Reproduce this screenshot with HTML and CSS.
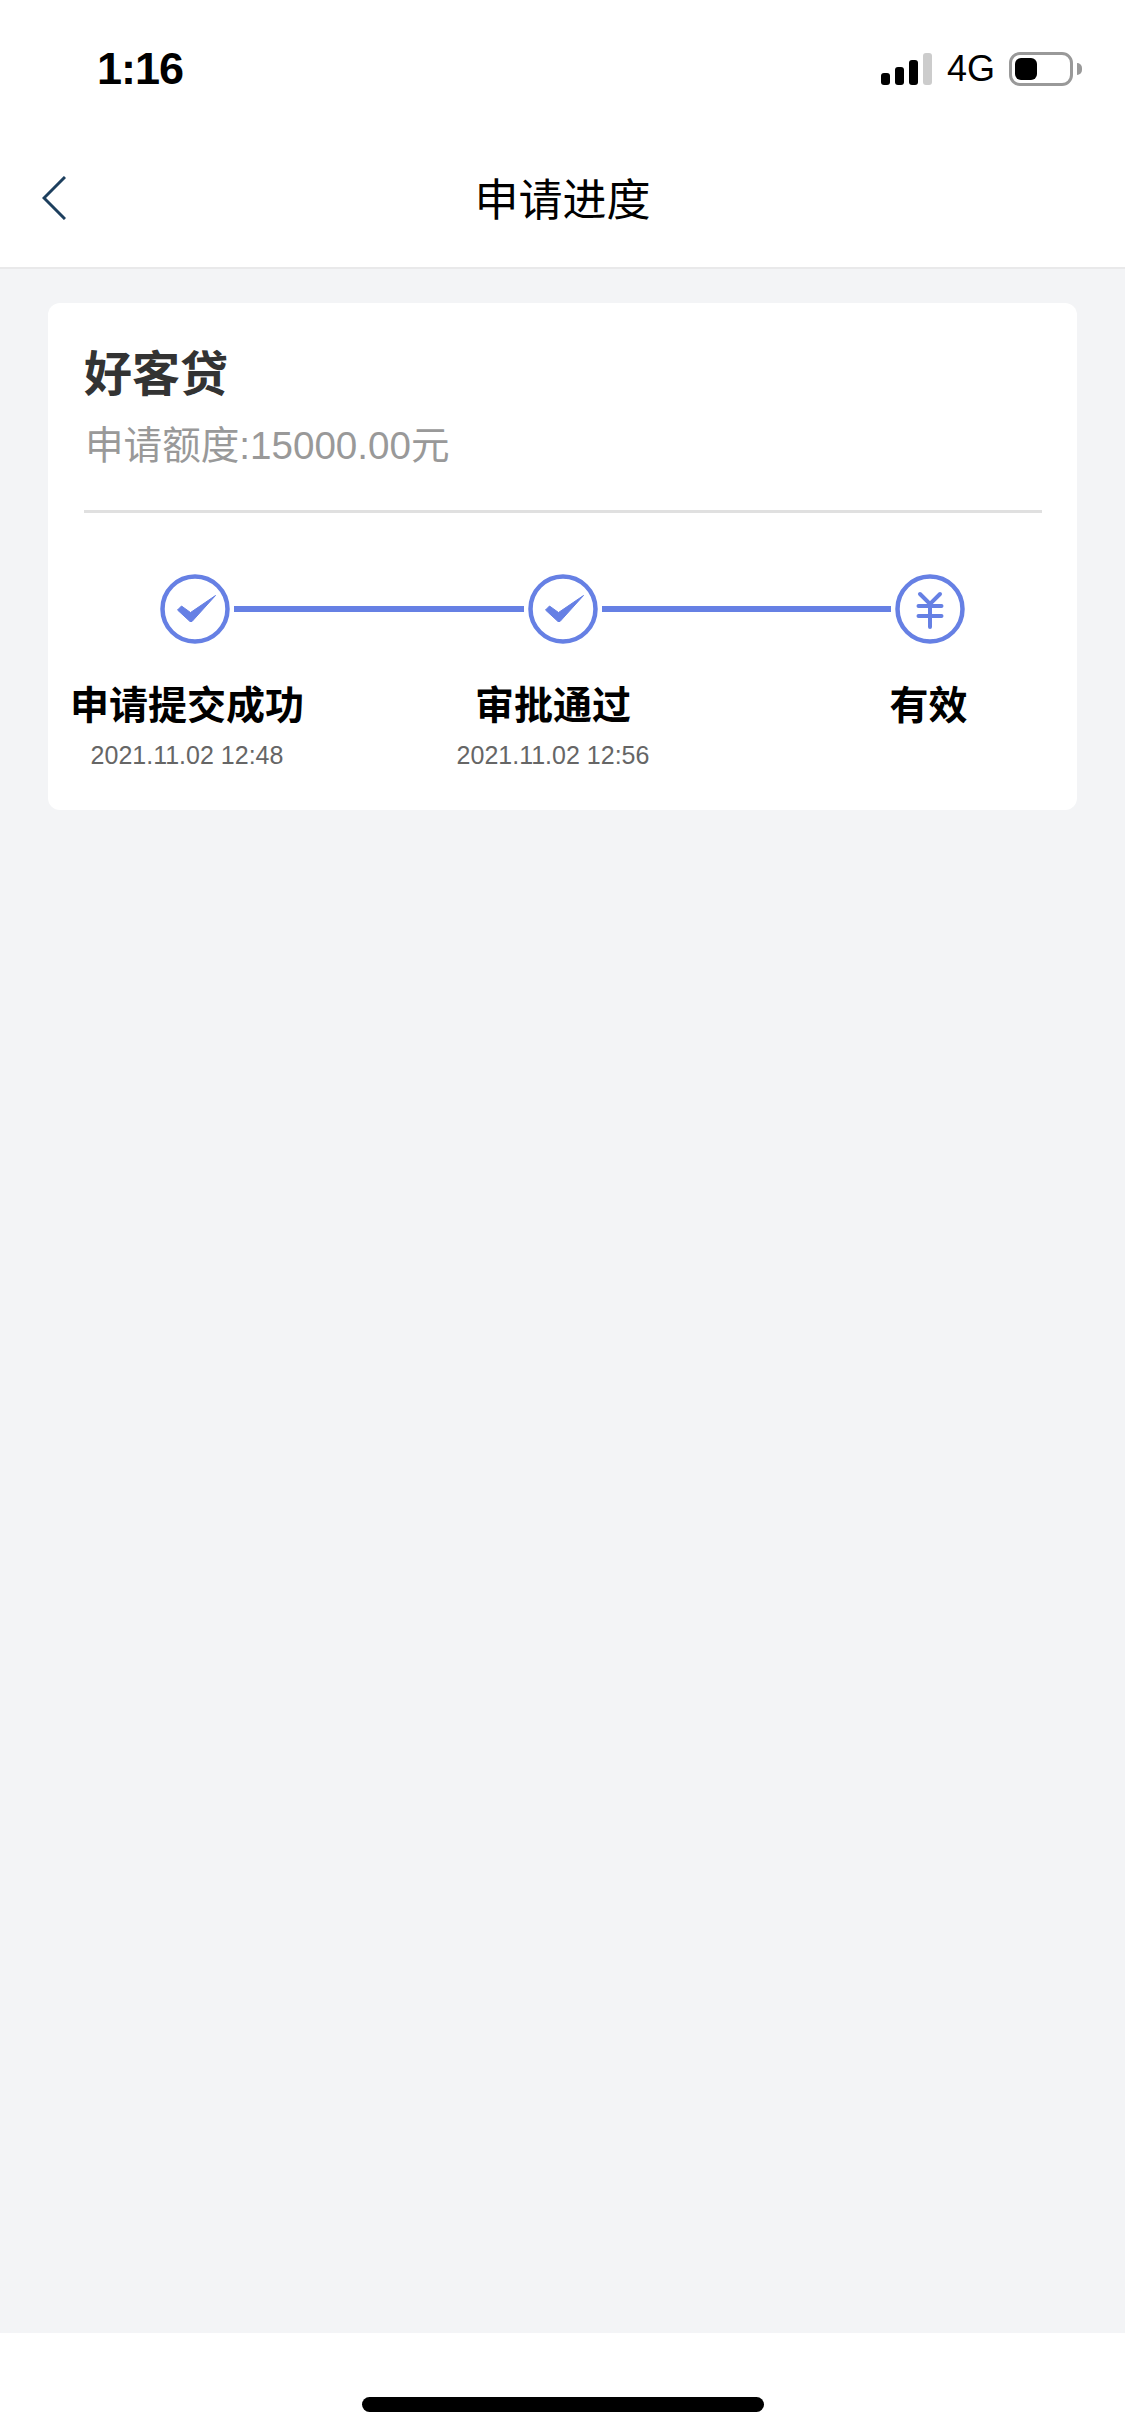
FILE: index.html
```html
<!DOCTYPE html>
<html lang="zh-CN">
<head>
  <meta charset="UTF-8" />
  <meta name="viewport" content="width=device-width, initial-scale=1.0"/>
  <title>申请进度</title>
  <link rel="stylesheet" href="styles.css">
</head>
<body>
  <header>
    <div class="status-bar">
      <div class="time">1:16</div>
      <div class="status-icons">
        <div class="signal">
          <span class="bar bar-1"></span>
          <span class="bar bar-2"></span>
          <span class="bar bar-3"></span>
          <span class="bar bar-4"></span>
        </div>
        <div class="network">4G</div>
        <div class="battery"><span class="battery-level"></span></div>
        <span class="battery-tip"></span>
      </div>
    </div>
    <nav>
      <a class="back" href="#">
        <svg width="24" height="44" viewBox="0 0 24 44"><path d="M23 1 L2 22 L23 43" fill="none" stroke="#1d3f5e" stroke-width="3"/></svg>
      </a>
      <h1>申请进度</h1>
    </nav>
  </header>

  <main>
    <section class="card">
      <h2>好客贷</h2>
      <p class="amount">申请额度:15000.00元</p>
      <div class="divider"></div>

      <div class="track">
        <svg class="node" width="70" height="70" viewBox="0 0 70 70">
          <circle cx="35" cy="35" r="32.500" fill="none" stroke="#6680e4" stroke-width="4.500"/>
          <path d="M17.500 36 L21.500 32 L30.500 38.500 L55.500 21.500 L32 47.500 L30 47.500 Z" fill="#6680e4" stroke="#6680e4" stroke-linejoin="round"/>
        </svg>
        <span class="line"></span>
        <svg class="node" width="70" height="70" viewBox="0 0 70 70">
          <circle cx="35" cy="35" r="32.500" fill="none" stroke="#6680e4" stroke-width="4.500"/>
          <path d="M17.500 36 L21.500 32 L30.500 38.500 L55.500 21.500 L32 47.500 L30 47.500 Z" fill="#6680e4" stroke="#6680e4" stroke-linejoin="round"/>
        </svg>
        <span class="line"></span>
        <svg class="node" width="70" height="70" viewBox="0 0 70 70">
          <circle cx="35" cy="35" r="32.500" fill="none" stroke="#6680e4" stroke-width="4.500"/>
          <path d="M25 20 L35 30 L45 20 M23.500 32 H46.500 M23.500 42 H46.500 M35 30 V53" fill="none" stroke="#6680e4" stroke-width="4" stroke-linecap="round"/>
        </svg>
      </div>

      <div class="steps">
        <div class="step">
          <div class="step-name">申请提交成功</div>
          <div class="step-time">2021.11.02 12:48</div>
        </div>
        <div class="step">
          <div class="step-name">审批通过</div>
          <div class="step-time">2021.11.02 12:56</div>
        </div>
        <div class="step">
          <div class="step-name">有效</div>
        </div>
      </div>
    </section>
  </main>

  <footer>
    <div class="home-bar"></div>
  </footer>
</body>
</html>
```

FILE: styles.css
```css
* {
  box-sizing: border-box;
}

body {
  margin: 0;
  height: 2436px;
  display: flex;
  flex-direction: column;
  background-color: #f3f4f6;
  font-family: "Liberation Sans", "Noto Sans CJK SC", sans-serif;
  color: #000;
}

header {
  background-color: #fff;
  border-bottom: 2px solid #e9e9ea;
}

.status-bar {
  height: 138px;
  display: flex;
  justify-content: space-between;
  align-items: center;
  padding: 0 43px 0 97px;
}

.time {
  font-size: 45px;
  font-weight: 700;
  letter-spacing: -1px;
}

.status-icons {
  display: flex;
  align-items: center;
}

.signal {
  display: flex;
  align-items: flex-end;
  gap: 5px;
  height: 32px;
  margin-right: 15px;
}

.bar {
  width: 9px;
  background-color: #000;
  border-radius: 3px;
}

.bar-1 { height: 12px; }
.bar-2 { height: 18px; }
.bar-3 { height: 25px; }
.bar-4 { height: 32px; background-color: #ccc; }

.network {
  font-size: 36px;
  margin-right: 14px;
}

.battery {
  width: 64px;
  height: 34px;
  padding: 3px;
  border: 3px solid #999;
  border-radius: 11px;
}

.battery-level {
  display: block;
  width: 22px;
  height: 22px;
  background-color: #000;
  border-radius: 6px;
}

.battery-tip {
  width: 5px;
  height: 12px;
  margin-left: 4px;
  background-color: #999;
  border-radius: 0 6px 6px 0;
}

nav {
  position: relative;
  height: 129px;
  display: flex;
  justify-content: center;
  align-items: center;
  padding-bottom: 12px;
}

.back {
  position: absolute;
  left: 42px;
  top: 38px;
  display: flex;
}

nav h1 {
  margin: 0;
  font-size: 44px;
  font-weight: 400;
}

main {
  flex: 1;
  padding: 34px 48px;
}

.card {
  height: 507px;
  padding-top: 44px;
  background-color: #fff;
  border-radius: 12px;
}

.card h2 {
  margin: 0 0 0 36px;
  font-size: 48px;
  font-weight: 700;
  line-height: 56px;
  color: #333;
}

.amount {
  margin: 20px 0 0 37px;
  font-size: 38.600px;
  line-height: 46px;
  color: #999;
}

.divider {
  height: 3px;
  margin: 41px 35px 0 36px;
  background-color: #e0e0e0;
}

.track {
  display: flex;
  align-items: center;
  gap: 4px;
  padding: 0 112px;
  margin-top: 61px;
}

.node {
  flex: none;
}

.line {
  flex: 1;
  height: 6px;
  background-color: #6680e4;
}

.steps {
  display: grid;
  grid-template-columns: 278px 454px 1fr;
  margin-top: 38px;
  text-align: center;
}

.step-name {
  font-size: 39px;
  font-weight: 700;
  line-height: 48px;
}

.step-time {
  margin-top: 10px;
  font-size: 25px;
  line-height: 30px;
  color: #666;
}

footer {
  height: 103px;
  display: flex;
  justify-content: center;
  padding-top: 64px;
  background-color: #fff;
}

.home-bar {
  width: 402px;
  height: 15px;
  background-color: #000;
  border-radius: 8px;
}
```
